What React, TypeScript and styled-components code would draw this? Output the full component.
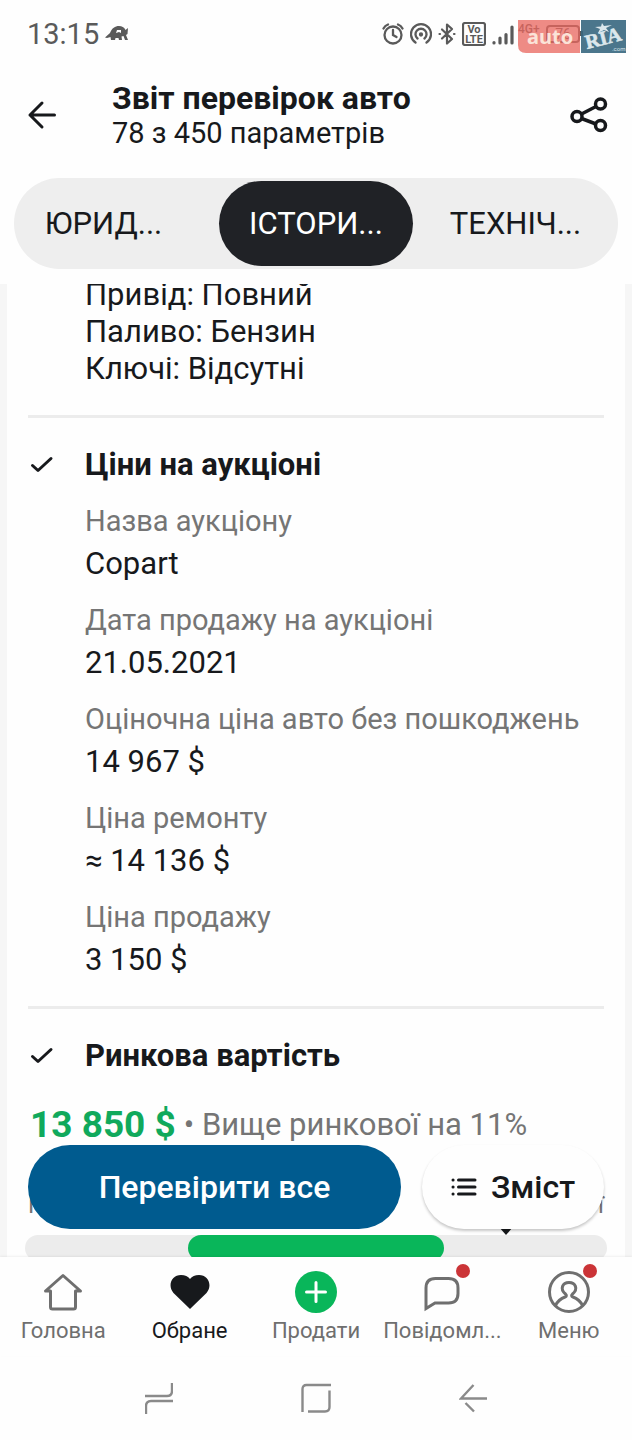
import React from "react";
import styled, { createGlobalStyle, css } from "styled-components";

const GlobalStyle = createGlobalStyle`
  * { box-sizing: border-box; }
  body { margin: 0; background: #fefefe; }
  body, button { font-family: Roboto, "Noto Sans", sans-serif; }
  button { border: 0; padding: 0; background: none; color: inherit; cursor: pointer; }
  h1, h2, p, dl, dd { margin: 0; }
  svg { display: block; flex: none; }
`;

const Page = styled.div`
  display: flex;
  flex-direction: column;
  height: 100vh;
  background: #fefefe;
  color: #17191c;
`;

const StatusBar = styled.div`
  position: relative;
  display: flex;
  justify-content: space-between;
  align-items: center;
  height: 68px;
  padding: 0 49px 0 27px;
  color: #5a5a5a;
`;

const StatusGroup = styled.div`
  display: flex;
  align-items: center;
  gap: 6px;
`;

const Clock = styled.span`
  font-size: 29px;
  line-height: 34px;
`;

const Watermark = styled.a`
  position: absolute;
  top: 20px;
  right: 6px;
`;

const Header = styled.header`
  display: flex;
  align-items: center;
  height: 96px;
  padding: 0 24px 2px 24px;
`;

const IconButton = styled.button`
  display: flex;
`;

const Heading = styled.div`
  flex: 1;
  padding-left: 52px;
`;

const Title = styled.h1`
  font-size: 32px;
  line-height: 36px;
  font-weight: 700;
`;

const Subtitle = styled.p`
  font-size: 29px;
  line-height: 34px;
`;

const TabsWrap = styled.div`
  padding: 14px 14px 15px;
`;

const Tabs = styled.nav`
  display: grid;
  grid-template-columns: 205fr 194fr 205fr;
  padding: 3px 0;
  border-radius: 46px;
  background: #eeeeee;
`;

const Tab = styled.button<{ $active?: boolean; $first?: boolean }>`
  height: 85px;
  padding-right: ${(p) => (p.$first ? 26 : 0)}px;
  border-radius: 43px;
  font-size: 31px;
  ${(p) => (p.$active ? css`background: #202226; color: #fff;` : "")}
`;

const Scroller = styled.main`
  position: relative;
  flex: 1;
  min-height: 0;
  overflow: hidden;
  padding: 0 7px;
  background: #f6f6f6;
`;

const Sheet = styled.div`
  display: flow-root;
  height: 100%;
  padding: 0 21px;
  background: #fefefe;
`;

const Facts = styled.div`
  margin-top: -8px;
  padding: 0 0 28px 57px;
  font-size: 31px;
  line-height: 37px;
  border-bottom: 3px solid #ececec;
`;

const Section = styled.section<{ $divided?: boolean }>`
  padding: 28px 0 25px;
  ${(p) => (p.$divided ? css`border-bottom: 3px solid #ececec;` : "")}
`;

const SectionHead = styled.div`
  display: flex;
  align-items: center;
  gap: 29px;
`;

const SectionTitle = styled.h2`
  font-size: 31px;
  line-height: 38px;
  font-weight: 700;
`;

const Details = styled.dl`
  display: grid;
  gap: 15px;
  padding: 17px 0 0 57px;
`;

const Label = styled.dt`
  font-size: 29px;
  line-height: 41px;
  color: #757575;
`;

const Value = styled.dd`
  font-size: 31px;
  line-height: 43px;
`;

const PriceRow = styled.p`
  display: flex;
  align-items: center;
  gap: 8px;
  padding: 28px 0 0 2px;
  line-height: 44px;
  color: #757575;
`;

const Price = styled.strong`
  font-size: 37px;
  color: #10a95c;
`;

const Verdict = styled.span`
  font-size: 31px;
`;

const RangeLabels = styled.div`
  display: flex;
  justify-content: space-between;
  padding-top: 41px;
  font-size: 24px;
  line-height: 34px;
  color: #757575;
`;

const RangeTrack = styled.div`
  position: relative;
  height: 26px;
  margin: 13px -3px 0;
  border-radius: 13px;
  background: #ececec;
`;

const RangeFill = styled.div`
  height: 100%;
  margin: 0 28%;
  border-radius: 13px;
  background: #09b65a;
`;

const Marker = styled.svg`
  position: absolute;
  top: -8px;
  left: 82%;
  margin-left: -3px;
`;

const Actions = styled.div`
  position: absolute;
  left: 28px;
  right: 28px;
  bottom: 28px;
  display: flex;
  gap: 21px;
`;

const ActionButton = styled.button<{ $primary?: boolean }>`
  display: flex;
  align-items: center;
  justify-content: center;
  gap: 14px;
  flex: ${(p) => (p.$primary ? "1 1 0" : "0 0 182px")};
  height: 84px;
  border-radius: 42px;
  font-size: 32px;
  font-weight: 500;
  ${(p) =>
    p.$primary
      ? css`background: #005b8f; color: #fff;`
      : css`background: #fefefe; box-shadow: 0 2px 3px rgba(0, 0, 0, 0.22);`}
`;

const BottomNav = styled.nav`
  position: relative;
  display: grid;
  grid-template-columns: repeat(5, 1fr);
  height: 99px;
  background: #fefefe;
  box-shadow: 0 -1px 2px rgba(0, 0, 0, 0.06);
`;

const NavItem = styled.button<{ $active?: boolean }>`
  display: flex;
  flex-direction: column;
  align-items: center;
  gap: 3px;
  padding-top: 14px;
  font-size: 22px;
  line-height: 30px;
  color: ${(p) => (p.$active ? "#17191c" : "#6f6f6f")};
`;

const NavIcon = styled.span`
  position: relative;
  display: block;
`;

const Dot = styled.span`
  position: absolute;
  top: -7px;
  right: -7px;
  width: 14px;
  height: 14px;
  border-radius: 50%;
  background: #cb3437;
`;

const SystemNav = styled.nav`
  display: flex;
  justify-content: space-between;
  align-items: center;
  height: 84px;
  padding: 0 145px;
  color: #8a8a8a;
`;

const Check = () => (
  <svg width="28" height="28" viewBox="0 0 28 28" fill="none" stroke="#17191c" strokeWidth="3" strokeLinecap="round" strokeLinejoin="round">
    <path d="M4.5 14.5 10 19.500 23 7.500" />
  </svg>
);

const NavSvg = ({ children }: { children: React.ReactNode }) => (
  <svg width="42" height="42" viewBox="0 0 42 42" fill="none" stroke="currentColor" strokeWidth="3">
    {children}
  </svg>
);

const details = [
  ["Назва аукціону", "Copart"],
  ["Дата продажу на аукціоні", "21.05.2021"],
  ["Оціночна ціна авто без пошкоджень", "14 967 $"],
  ["Ціна ремонту", "≈ 14 136 $"],
  ["Ціна продажу", "3 150 $"],
];

const navItems = [
  {
    label: "Головна",
    icon: <path strokeLinejoin="round" d="M8.5 20H3.5L21 4.5 38.5 20h-5v16q0 2-2 2h-21q-2 0-2-2z" />,
  },
  {
    label: "Обране",
    active: true,
    icon: (
      <path
        fill="currentColor"
        stroke="none"
        d="M21 38 4.5 22C-2 14 3 4 12 4c4 0 7 1.500 9 4 2-2.500 5-4 9-4 9 0 14 10 7.500 18z"
      />
    ),
  },
  {
    label: "Продати",
    icon: (
      <>
        <circle cx="21" cy="21" r="21" fill="#09b65a" stroke="none" />
        <path stroke="#fff" strokeLinecap="round" d="M21 11.500v19M11.500 21h19" />
      </>
    ),
  },
  {
    label: "Повідомл...",
    dot: true,
    icon: <path d="M5 37.500V17Q5 7.500 14.500 7.500h13Q37 7.500 37 17v5.500Q37 32 27.500 32H14z" />,
  },
  {
    label: "Меню",
    dot: true,
    icon: (
      <>
        <circle cx="21" cy="21" r="19.500" />
        <path d="M7.500 34.500c2-4 5-7 9.500-8.500q2.500-1 .5-3c-6-5-3-11.500 3.500-11.500s9.500 6.500 3.500 11.500q-2 2 .5 3c4.500 1.500 7.500 4.500 9.500 8.500" />
      </>
    ),
  },
];

export default function App() {
  return (
    <Page>
      <GlobalStyle />
      <StatusBar>
        <StatusGroup>
          <Clock>13:15</Clock>
          <svg width="24" height="18" viewBox="0 0 24 18" fill="currentColor" fillRule="evenodd">
            <path d="M0 12.500 5 8C7 3 10 1 14 1c3 0 5 1 6.500 4L23 3l-.5 6-1.500 1 2 5h-3l-1.500-4-2 .500L17 15h-3l-.5-2h-3L10 15H6l-.5-3L2 13zM12 5l-1 3 3-1 2 1V5z" />
          </svg>
        </StatusGroup>
        <StatusGroup>
          <svg width="22" height="24" viewBox="0 0 22 24" fill="none" stroke="currentColor" strokeWidth="2.300" strokeLinecap="round">
            <circle cx="11" cy="13" r="8.500" />
            <path d="M11 8v5l3.500 2M1.500 6.500Q3 3.500 6 2.500M20.500 6.500Q19 3.500 16 2.500" />
          </svg>
          <svg width="22" height="24" viewBox="0 0 22 24" fill="none" stroke="currentColor" strokeWidth="2.300" strokeLinecap="round">
            <path d="M5.500 20.500A10 10 0 1 1 16.500 20.500M7.500 16.500A5.500 5.500 0 1 1 14.500 16.500" />
            <circle cx="11" cy="12.500" r="1" fill="currentColor" />
          </svg>
          <svg width="18" height="24" viewBox="0 0 18 24" fill="none" stroke="currentColor" strokeWidth="2.200" strokeLinejoin="round" strokeLinecap="round">
            <path d="M4 7.500 14 17 9 21.500v-19L14 7 4 16.500M1.500 12h.5M16 12h.5" />
          </svg>
          <svg width="24" height="24" viewBox="0 0 24 24" fill="none" stroke="currentColor" strokeWidth="2.200">
            <rect x="1" y="1" width="22" height="22" rx="2" />
            <g fill="currentColor" stroke="none" fontFamily="Roboto, sans-serif" fontWeight="700" fontSize="11" textAnchor="middle">
              <text x="12" y="11">Vo</text>
              <text x="12" y="21">LTE</text>
            </g>
          </svg>
          <svg width="22" height="24" viewBox="0 0 22 24" fill="none" stroke="currentColor" strokeWidth="3.200" strokeLinecap="round">
            <path d="M2 20.500v.5M8 16v5M14 12.500V21M20 5v16" />
          </svg>
          <svg width="20" height="24" viewBox="0 0 20 24" fill="currentColor" fontFamily="Roboto, sans-serif" fontWeight="500" fontSize="12" overflow="visible">
            <text x="-2" y="11">4G+</text>
          </svg>
          <svg width="37" height="24" viewBox="0 0 37 24" fill="none" stroke="currentColor" strokeWidth="2">
            <rect x="1" y="4" width="32" height="16" rx="3" />
            <path strokeWidth="3" d="M35.500 9v5" />
            <text x="17" y="17" fill="currentColor" stroke="none" fontFamily="Roboto, sans-serif" fontSize="14" textAnchor="middle">76</text>
          </svg>
        </StatusGroup>
        <Watermark href="#" aria-label="auto RIA">
          <svg width="108" height="33" viewBox="0 0 108 33">
            <path d="M0 0h62v33H8q-8 0-8-8z" fill="#e8675e" fillOpacity="0.76" />
            <path d="M63 0h45v33H63z" fill="#37677f" fillOpacity="0.9" />
            <text x="9" y="24" fill="#fbe3d8" fontFamily="'Noto Sans', sans-serif" fontWeight="700" fontSize="20">auto</text>
            <g fill="#dbe7ec">
              <text x="69" y="29" transform="rotate(-14 69 29)" fontFamily="'Liberation Serif', serif" fontWeight="700" fontSize="20" stroke="#dbe7ec" strokeWidth="0.600">RIA</text>
              <path d="m84 3 2 3 8-1-6 3 3 4-5-2-6 3 2-4-5-2 6-.500z" />
              <text x="94" y="31" fontFamily="Roboto, sans-serif" fontSize="6">.com</text>
            </g>
          </svg>
        </Watermark>
      </StatusBar>
      <Header>
        <IconButton aria-label="Назад">
          <svg width="36" height="36" viewBox="0 0 36 36" fill="none" stroke="currentColor" strokeWidth="3" strokeLinecap="round" strokeLinejoin="round">
            <path d="M30.500 18H6M18 6 6 18l12 12" />
          </svg>
        </IconButton>
        <Heading>
          <Title>Звіт перевірок авто</Title>
          <Subtitle>78 з 450 параметрів</Subtitle>
        </Heading>
        <IconButton aria-label="Поділитися">
          <svg width="38" height="36" viewBox="0 0 38 36" fill="none" stroke="currentColor" strokeWidth="3.500">
            <circle cx="7" cy="19.500" r="5" />
            <circle cx="30.500" cy="7" r="5" />
            <circle cx="30.500" cy="28.500" r="5" />
            <path d="M11.500 17 26 9.500M11.500 21.500 26 27" />
          </svg>
        </IconButton>
      </Header>
      <TabsWrap>
        <Tabs>
          <Tab $first>ЮРИД...</Tab>
          <Tab $active>ІСТОРИ...</Tab>
          <Tab>ТЕХНІЧ...</Tab>
        </Tabs>
      </TabsWrap>
      <Scroller>
        <Sheet>
          <Facts>
            <p>Привід: Повний</p>
            <p>Паливо: Бензин</p>
            <p>Ключі: Відсутні</p>
          </Facts>
          <Section $divided>
            <SectionHead>
              <Check />
              <SectionTitle>Ціни на аукціоні</SectionTitle>
            </SectionHead>
            <Details>
              {details.map(([label, value]) => (
                <div key={label}>
                  <Label>{label}</Label>
                  <Value>{value}</Value>
                </div>
              ))}
            </Details>
          </Section>
          <Section>
            <SectionHead>
              <Check />
              <SectionTitle>Ринкова вартість</SectionTitle>
            </SectionHead>
            <PriceRow>
              <Price>13 850 $</Price>
              <Verdict>• Вище ринкової на 11%</Verdict>
            </PriceRow>
            <RangeLabels>
              <span>Нижче ринкової</span>
              <span>Вище ринкової</span>
            </RangeLabels>
            <RangeTrack>
              <RangeFill />
              <Marker width="14" height="8" viewBox="0 0 14 8">
                <path d="M0 0h14L7 8z" fill="#17191c" />
              </Marker>
            </RangeTrack>
          </Section>
        </Sheet>
        <Actions>
          <ActionButton $primary>Перевірити все</ActionButton>
          <ActionButton>
            <svg width="26" height="20" viewBox="0 0 26 20" fill="none" stroke="currentColor" strokeWidth="3" strokeLinecap="round">
              <path d="M7.500 3H24M7.500 10H24M7.500 17H24M2 3h.1M2 10h.1M2 17h.1" />
            </svg>
            Зміст
          </ActionButton>
        </Actions>
      </Scroller>
      <BottomNav>
        {navItems.map((item) => (
          <NavItem key={item.label} $active={item.active}>
            <NavIcon>
              <NavSvg>{item.icon}</NavSvg>
              {item.dot && <Dot />}
            </NavIcon>
            {item.label}
          </NavItem>
        ))}
      </BottomNav>
      <SystemNav>
        <IconButton aria-label="Останні програми">
          <svg width="28" height="31" viewBox="0 0 28 31" fill="none" stroke="currentColor" strokeWidth="2.400">
            <path d="M0 13h22q5 0 5-5V0M28 18H6q-5 0-5 5v8" />
          </svg>
        </IconButton>
        <IconButton aria-label="Головний екран">
          <svg width="30" height="30" viewBox="0 0 30 30" fill="none" stroke="currentColor" strokeWidth="2.400">
            <path d="M1.500 29V6q0-4 4-4H30M28.500 7.500V24q0 4.500-4.500 4.500H7" />
          </svg>
        </IconButton>
        <IconButton aria-label="Повернутися">
          <svg width="28" height="30" viewBox="0 0 28 30" fill="none" stroke="currentColor" strokeWidth="2.400">
            <path d="M28 15.500H2L14.500 2M6.500 20l8.500 8.500" />
          </svg>
        </IconButton>
      </SystemNav>
    </Page>
  );
}
